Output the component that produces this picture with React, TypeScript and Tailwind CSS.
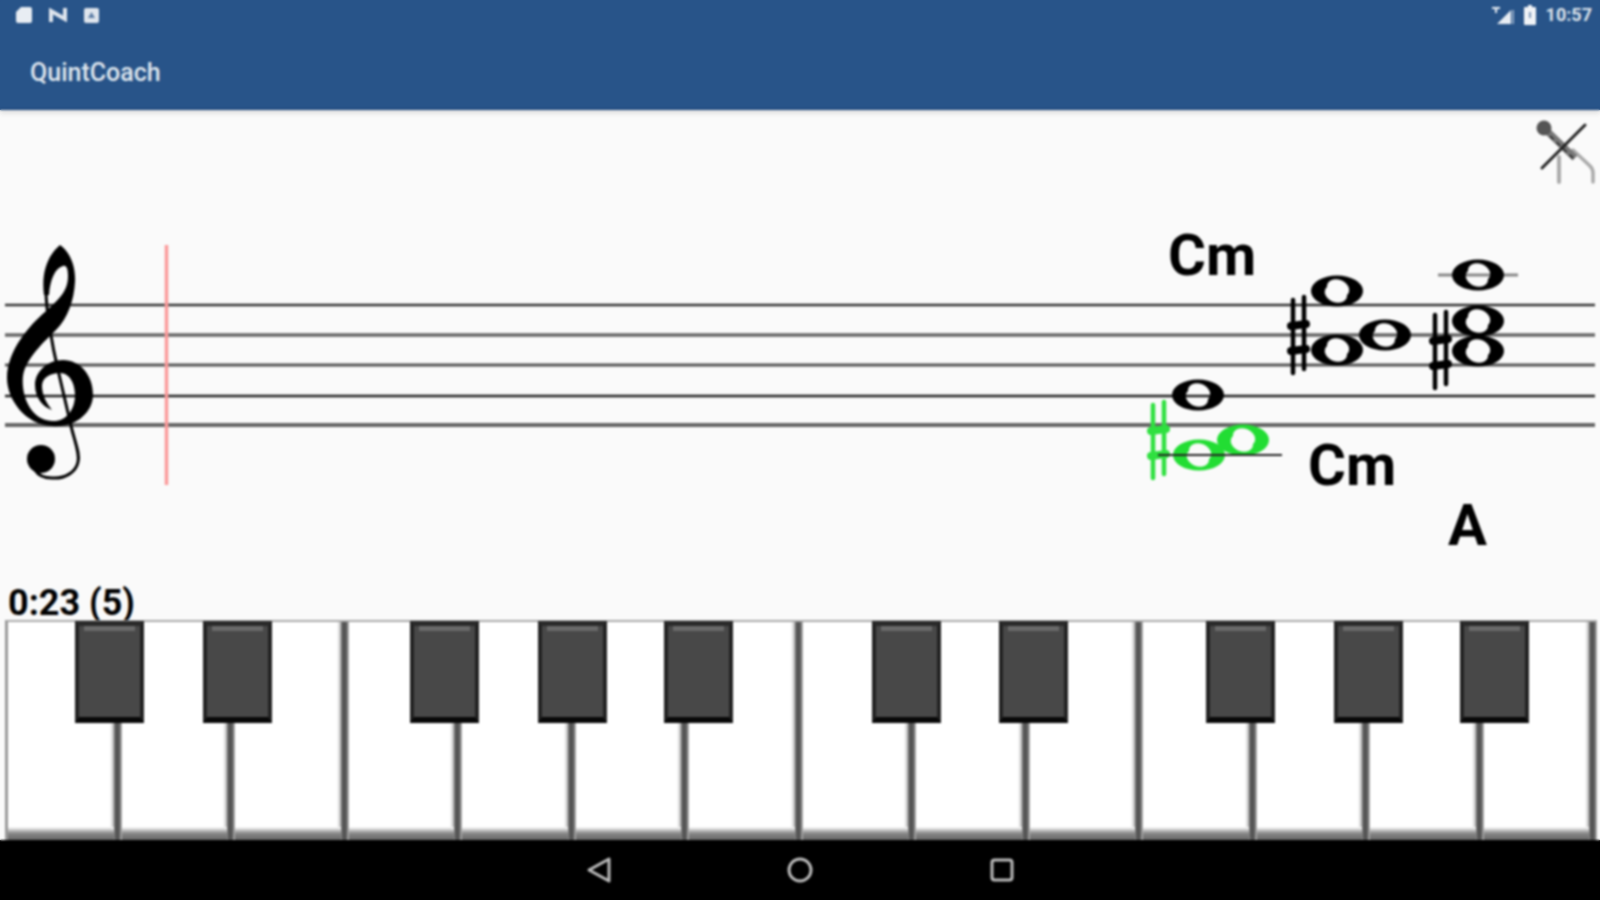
const blackKeys = [
  'left-[75px]',
  'left-[203px]',
  'left-[410px]',
  'left-[538px]',
  'left-[664px]',
  'left-[872px]',
  'left-[999px]',
  'left-[1206px]',
  'left-[1334px]',
  'left-[1460px]',
];

const whiteKeys = Array.from({ length: 14 }, (_, i) => i);
const staffLines = [
  { y: 305, color: '#333', width: 2.5 },
  { y: 335, color: '#666', width: 3.5 },
  { y: 365, color: '#555', width: 3 },
  { y: 396, color: '#222', width: 2.5 },
  { y: 425, color: '#666', width: 4 },
];

// whole note: outer ellipse with a tilted hole, so the staff shows through
function Note({ x, y, color = '#000' }: { x: number; y: number; color?: string }) {
  const d =
    `M${x - 26} ${y}A26 15.5 0 1 0 ${x + 26} ${y}A26 15.5 0 1 0 ${x - 26} ${y}Z` +
    `M${x - 10} ${y - 4}A11.5 8.5 22 1 0 ${x + 10} ${y + 4}A11.5 8.5 22 1 0 ${x - 10} ${y - 4}Z`;
  return <path d={d} fill={color} fillRule="evenodd" />;
}

function Sharp({ x, y, color = '#000' }: { x: number; y: number; color?: string }) {
  return (
    <g stroke={color} strokeLinecap="round">
      <path d={`M${x} ${y + 3}V${y + 76}`} strokeWidth="4.5" />
      <path d={`M${x + 11} ${y}V${y + 72}`} strokeWidth="4.5" />
      <path d={`M${x - 2} ${y + 29}L${x + 13} ${y + 27}`} strokeWidth="8" />
      <path d={`M${x - 2} ${y + 54}L${x + 13} ${y + 52}`} strokeWidth="8" />
    </g>
  );
}

function Clef() {
  return (
    <g>
      <path
        d="M60 245C68 250 76 264 75 282C74 300 68 318 56 330C44 342 26 358 23 376C21 395 30 420 52 421C66 422 75 410 75 395C75 384 70 373 60 373C50 373 42 378 42 386C42 395 47 404 52 410C43 407 35 398 35 385C35 372 47 360 63 360C80 360 93 375 93 395C93 412 76 428 52 426C26 425 7 400 7 378C7 350 30 325 45 312C58 300 68 292 68 276C68 270 67 265 63 266C55 268 50 280 49 295L44 295C41 272 48 255 60 245Z"
        fill="#000"
      />
      <path
        d="M46 290C46 310 52 345 58 370L72 430C76 445 80 455 78 462C76 472 65 479 52 478C44 478 38 475 35 470"
        fill="none"
        stroke="#000"
        strokeWidth="3"
      />
      <circle cx="41" cy="459" r="14" fill="#000" />
    </g>
  );
}

function MicOff() {
  return (
    <svg className="absolute right-0 top-[8px] w-[64px] h-[72px]" viewBox="1536 118 64 72" fill="none">
      <path d="M1559 157V182" stroke="#aaa" strokeWidth="4" strokeLinecap="round" />
      <path d="M1573 150L1590 166Q1593 169 1593 173V182" stroke="#aaa" strokeWidth="3.5" strokeLinecap="round" />
      <path d="M1547 131L1575 158" stroke="#777" strokeWidth="7" />
      <circle cx="1544" cy="128" r="7.5" fill="#555" />
      <path d="M1585 125L1542 168" stroke="#222" strokeWidth="3" strokeLinecap="round" />
      <path d="M1550 136L1575 160" stroke="#222" strokeWidth="1.5" strokeDasharray="5 4" />
    </svg>
  );
}

export default function App() {
  return (
    <div className="relative w-[1600px] h-[900px] flex flex-col overflow-hidden bg-[#fafafa] font-['Roboto',sans-serif]">
      {/* App bar */}
      <header className="relative z-10 h-[110px] flex flex-col bg-[#285489] border-b-2 border-[#214b80] shadow-[0_3px_5px_rgba(0,0,0,0.12)]">
        <div className="h-[30px] flex items-center justify-between pl-[16px] pr-[8px]">
          <div className="flex items-center gap-[17px]">
            <svg className="w-[16px] h-[16px]" viewBox="0 0 16 16" fill="#e8edf3">
              <path d="M5 0H14a2 2 0 0 1 2 2V14a2 2 0 0 1-2 2H2a2 2 0 0 1-2-2V5Z" />
            </svg>
            <svg className="w-[18px] h-[14px]" viewBox="0 0 18 14" fill="none" stroke="#dfe5ed" strokeWidth="4">
              <path d="M2 14V3L16 11V0" />
            </svg>
            <svg className="w-[15px] h-[15px]" viewBox="0 0 15 15">
              <rect width="15" height="15" rx="2" fill="#dfe5ed" />
              <path d="M7.5 4L11 10H4Z" fill="#5e7ea6" />
            </svg>
          </div>
          <div className="flex items-center gap-[10px]">
            <svg className="w-[22px] h-[18px]" viewBox="0 0 22 18" fill="#e8edf3">
              <path d="M19 4V18H5Z" />
              <rect x="20" y="4" width="2" height="14" fill="#8ea6c4" />
              <rect x="0" y="1" width="8" height="2" />
              <rect x="3" y="3" width="2" height="4" />
            </svg>
            <svg className="w-[12px] h-[20px]" viewBox="0 0 12 20" fill="#f0f3f7">
              <path d="M4 0H8V2H11a1 1 0 0 1 1 1V19a1 1 0 0 1-1 1H1a1 1 0 0 1-1-1V3a1 1 0 0 1 1-1H4Z" />
              <rect x="5" y="7" width="2" height="6" fill="#7d98ba" />
            </svg>
            <span className="text-[18px] font-bold leading-none text-[#dde4ec]">10:57</span>
          </div>
        </div>
        <div className="flex-1 flex items-center pl-[30px] pt-[6px]">
          <h1 className="text-[25px] font-medium leading-none text-[#dfe6ee]">QuintCoach</h1>
        </div>
      </header>

      {/* Staff */}
      <main className="relative flex-1 flex flex-col justify-end pl-[8px]">
        <svg className="absolute inset-0 w-full h-full" viewBox="0 110 1600 510">
          {staffLines.map((line) => (
            <path key={line.y} d={`M5 ${line.y}H1595`} stroke={line.color} strokeWidth={line.width} />
          ))}
          <path d="M166.5 245V485" stroke="#fb9a9a" strokeWidth="3.5" />
          <Clef />

          <Note x={1198} y={395} />
          <Sharp x={1153} y={402} color="#2fe040" />
          <Note x={1199} y={455} color="#22dd33" />
          <Note x={1243} y={440} color="#22dd33" />
          <path d="M1158 455H1282" stroke="#222" strokeWidth="2" />

          <Sharp x={1293} y={297} />
          <Note x={1337} y={291} />
          <Note x={1337} y={350} />
          <Note x={1385} y={335} />

          <path d="M1438 275H1518" stroke="#888" strokeWidth="3" />
          <Sharp x={1435} y={312} />
          <Note x={1478} y={275} />
          <Note x={1478} y={321} />
          <Note x={1478} y={351} />
        </svg>

        <span className="absolute left-[1168px] top-[116px] text-[58px] font-bold leading-none text-black">Cm</span>
        <span className="absolute left-[1308px] top-[326px] text-[58px] font-bold leading-none text-black">Cm</span>
        <span className="absolute left-[1448px] top-[386px] text-[58px] font-bold leading-none text-black">A</span>

        <MicOff />

        <span className="relative text-[36px] font-bold leading-none text-black translate-y-[1px]">0:23 (5)</span>
      </main>

      {/* Keyboard */}
      <section className="relative h-[220px] flex pl-[5px] pr-[3px] bg-[#fafafa]">
        {whiteKeys.map((k) => (
          <div key={k} className="relative flex-1 bg-white border-t-2 border-[#aaa] first:border-l-[3px] first:border-l-[#999]">
            <div className="absolute right-0 top-0 bottom-0 w-[12px] bg-[linear-gradient(to_right,#fff,#ccc_25%,#555_45%,#555_75%,#bbb)]" />
            <div className="absolute left-0 right-[8px] bottom-0 h-[13px] bg-gradient-to-b from-white via-[#888] to-[#666]" />
          </div>
        ))}
        {blackKeys.map((pos) => (
          <div
            key={pos}
            className={`absolute top-px w-[69px] h-[102px] bg-[#484848] border-x-[4px] border-t-[5px] border-b-[6px] border-x-[#222] border-t-[#2a2a2a] border-b-[#080808] ${pos}`}
          >
            <div className="mx-[5px] h-[5px] bg-[#6a6a6a]" />
          </div>
        ))}
      </section>

      {/* Navigation bar */}
      <nav className="h-[60px] bg-black flex items-center justify-center gap-[175px]">
        <svg className="w-[26px] h-[28px]" viewBox="0 0 26 28" fill="none" stroke="#bbb" strokeWidth="3" strokeLinejoin="round">
          <path d="M3 14L23 3V25Z" />
        </svg>
        <svg className="w-[26px] h-[28px]" viewBox="0 0 26 28" fill="none" stroke="#bbb" strokeWidth="3">
          <circle cx="13" cy="14" r="11" />
        </svg>
        <svg className="w-[26px] h-[28px]" viewBox="0 0 26 28" fill="none" stroke="#bbb" strokeWidth="3">
          <rect x="4" y="4" width="20" height="20" rx="2.5" />
        </svg>
      </nav>

      {/* the reference is a soft, upscaled capture */}
      <div className="absolute inset-0 z-20 pointer-events-none backdrop-blur-[1px]" />
    </div>
  );
}
